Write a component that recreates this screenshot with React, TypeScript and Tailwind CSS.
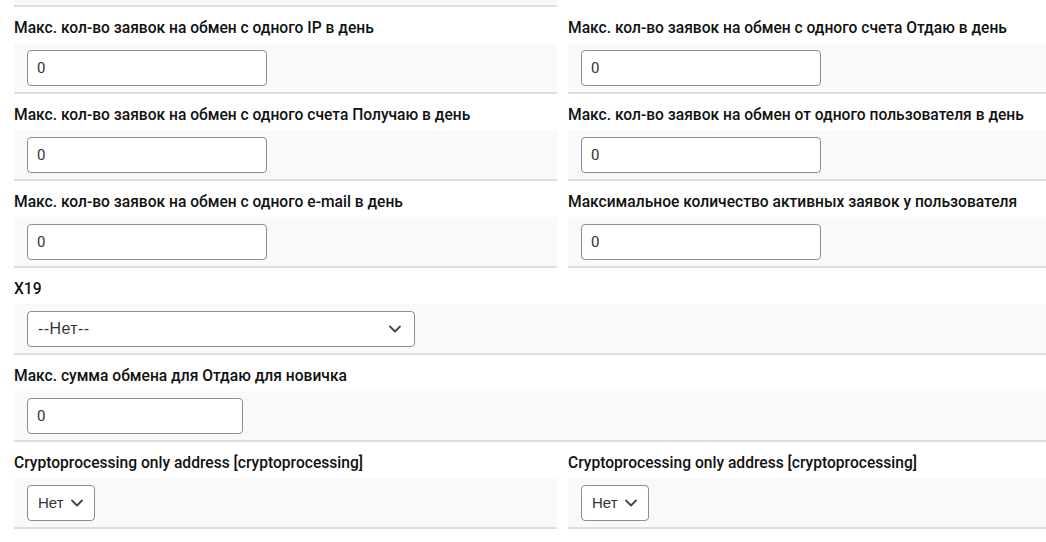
import React from 'react';

type Field = {
  label: string;
  kind: 'input' | 'select' | 'yesno';
  value: string;
  width?: string;
  full?: boolean;
};

const rows: Field[][] = [
  [
    { label: 'Макс. кол-во заявок на обмен с одного IP в день', kind: 'input', value: '0' },
    { label: 'Макс. кол-во заявок на обмен с одного счета Отдаю в день', kind: 'input', value: '0' },
  ],
  [
    { label: 'Макс. кол-во заявок на обмен с одного счета Получаю в день', kind: 'input', value: '0' },
    { label: 'Макс. кол-во заявок на обмен от одного пользователя в день', kind: 'input', value: '0' },
  ],
  [
    { label: 'Макс. кол-во заявок на обмен с одного e-mail в день', kind: 'input', value: '0' },
    { label: 'Максимальное количество активных заявок у пользователя', kind: 'input', value: '0' },
  ],
  [{ label: 'X19', kind: 'select', value: '--Нет--', full: true }],
  [{ label: 'Макс. сумма обмена для Отдаю для новичка', kind: 'input', value: '0', width: 'w-[216px]', full: true }],
  [
    { label: 'Cryptoprocessing only address [cryptoprocessing]', kind: 'yesno', value: 'Нет' },
    { label: 'Cryptoprocessing only address [cryptoprocessing]', kind: 'yesno', value: 'Нет' },
  ],
];

function Chevron() {
  return (
    <svg width="12" height="8" viewBox="0 0 12 8" fill="none" className="shrink-0">
      <path d="M1 1.5 6 6.5 11 1.5" stroke="#444" strokeWidth="1.8" strokeLinecap="round" strokeLinejoin="round" />
    </svg>
  );
}

function Control({ f }: { f: Field }) {
  if (f.kind === 'input') {
    return (
      <input
        readOnly
        value={f.value}
        className={`${f.width ?? 'w-[240px]'} h-[36px] rounded-[4px] border border-[#8e8e8e] bg-white px-[9px] text-[15px] text-[#333] outline-none`}
      />
    );
  }
  if (f.kind === 'select') {
    return (
      <div className="flex h-[36px] w-[388px] items-center justify-between rounded-[4px] border border-[#8e8e8e] bg-white pl-[10px] pr-[13px] font-['Liberation_Sans',sans-serif] text-[16px] tracking-[0.4px] text-[#333]">
        <span>{f.value}</span>
        <Chevron />
      </div>
    );
  }
  return (
    <div className="flex h-[36px] w-[68px] items-center gap-[7px] rounded-[4px] border border-[#8e8e8e] bg-white pl-[10px] font-['Liberation_Sans',sans-serif] text-[15px] text-[#333]">
      <span>{f.value}</span>
      <Chevron />
    </div>
  );
}

function FieldBlock({ f }: { f: Field }) {
  return (
    <div className={`${f.full ? 'col-span-2' : ''} border-b-2 border-[#dedede]`}>
      <div className="h-[36px] pt-[11px] text-[15.6px] leading-[20px] font-medium text-[#111] whitespace-nowrap">
        {f.label}
      </div>
      <div className="h-[49px] bg-[#f9f9f9] pl-[13px] pt-[7px]">
        <Control f={f} />
      </div>
    </div>
  );
}

export default function App() {
  return (
    <div className="w-[1046px] h-[542px] overflow-hidden bg-white pl-[14px] font-['Roboto',sans-serif]">
      <div className="grid grid-cols-[543px_543px] gap-x-[11px]">
        <div className="h-[7px] bg-[#f9f9f9] border-b-2 border-[#dedede]" />
        <div />
        {rows.map((r, i) => (
          <React.Fragment key={i}>
            {r.map((f, j) => (
              <FieldBlock key={j} f={f} />
            ))}
          </React.Fragment>
        ))}
      </div>
    </div>
  );
}
